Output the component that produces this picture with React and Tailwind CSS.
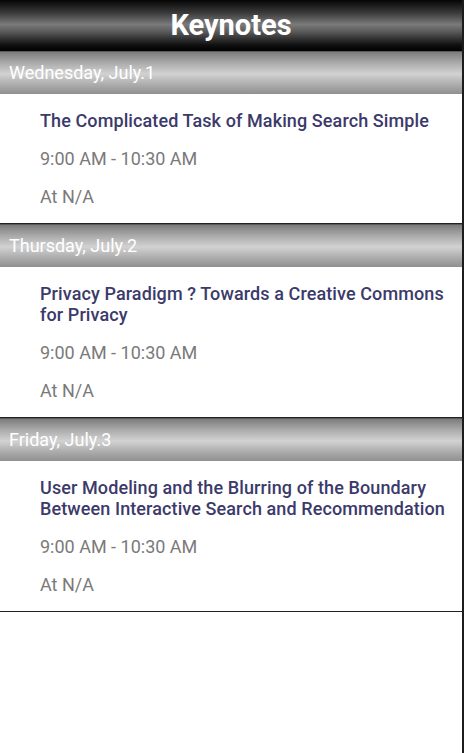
const days = [
  {
    label: 'Wednesday, July.1',
    talks: [{ title: ['The Complicated Task of Making Search Simple'], time: '9:00 AM - 10:30 AM', place: 'At N/A' }],
  },
  {
    label: 'Thursday, July.2',
    talks: [{ title: ['Privacy Paradigm ? Towards a Creative Commons', 'for Privacy'], time: '9:00 AM - 10:30 AM', place: 'At N/A' }],
  },
  {
    label: 'Friday, July.3',
    talks: [
      {
        title: ['User Modeling and the Blurring of the Boundary', 'Between Interactive Search and Recommendation'],
        time: '9:00 AM - 10:30 AM',
        place: 'At N/A',
      },
    ],
  },
];

function DayHeader({ label }) {
  return (
    <div className="h-[43px] flex items-center pl-[9px] border-t border-[#5a5a5a] bg-[linear-gradient(to_bottom,#7c7c7c_0%,#a9a9a9_25%,#d2d2d2_52%,#acacac_78%,#909090_100%)]">
      <span className="text-white text-[18px] leading-none font-normal">{label}</span>
    </div>
  );
}

function Talk({ talk }) {
  return (
    <div className="pl-10 pr-2 pt-[16px] pb-[16px] border-b border-[#222]">
      <div className="text-[#3b3a6a] text-[18px] leading-[21px] font-medium tracking-[0.1px]">
        {talk.title.map((line, i) => (
          <div key={i} className="whitespace-nowrap">{line}</div>
        ))}
      </div>
      <div className="mt-[17px] text-[#7a7a7a] text-[18px] leading-[21px]">{talk.time}</div>
      <div className="mt-[17px] text-[#7a7a7a] text-[18px] leading-[21px]">{talk.place}</div>
    </div>
  );
}

export default function App() {
  return (
    <div className="w-[464px] h-[753px] flex bg-white font-['Roboto',sans-serif]">
      <div className="w-[462px] flex flex-col">
        <div className="h-[51px] flex items-center justify-center bg-[linear-gradient(to_bottom,#050505_0%,#3a3a3a_25%,#7a7a7a_48%,#5a5a5a_62%,#101010_88%,#000_100%)]">
          <h1 className="text-white text-[29px] font-bold leading-none">Keynotes</h1>
        </div>
        {days.map((day) => (
          <div key={day.label}>
            <DayHeader label={day.label} />
            {day.talks.map((talk, i) => (
              <Talk key={i} talk={talk} />
            ))}
          </div>
        ))}
      </div>
      <div className="w-[2px] bg-[#1c1c1c]" />
    </div>
  );
}
